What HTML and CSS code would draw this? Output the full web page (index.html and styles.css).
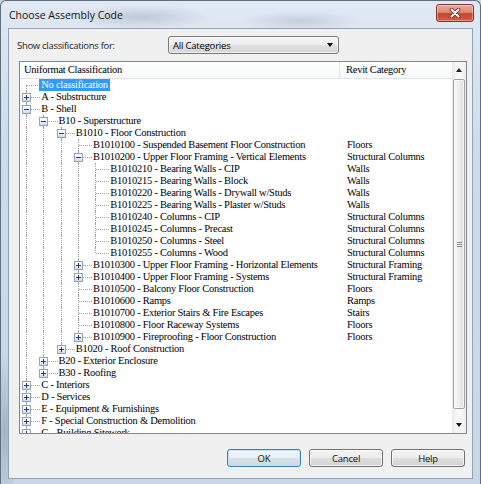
FILE: index.html
```html
<!DOCTYPE html>
<html>
<head>
<meta charset="utf-8">
<title>Choose Assembly Code</title>
<link rel="stylesheet" href="styles.css">
</head>
<body>
<div class="window">
  <div class="titlebar">
    <span class="title">Choose Assembly Code</span>
    <div class="close">
      <svg width="12" height="10" viewBox="0 0 12 10"><path d="M2.5 1.5 L9.5 8.5 M9.5 1.5 L2.5 8.5" stroke="#6b2a20" stroke-width="3.6" stroke-linecap="round"/><path d="M2.5 1.5 L9.5 8.5 M9.5 1.5 L2.5 8.5" stroke="#ffffff" stroke-width="2" stroke-linecap="round"/></svg>
    </div>
  </div>
  <div class="client">
    <div class="toprow">
      <span class="label">Show classifications for:</span>
      <div class="combo"><span>All Categories</span><i class="arrow-down"></i></div>
    </div>
    <div class="listbox">
      <div class="main">
        <div class="header"><span class="h1">Uniformat Classification</span><span class="h2">Revit Category</span></div>
        <div class="rows">
          <div class="row"><div class="tree"><i class="c f"></i><span class="txt sel">No classification</span></div></div>
          <div class="row"><div class="tree"><i class="c t"><b class="exp plus"></b></i><span class="txt">A - Substructure</span></div></div>
          <div class="row"><div class="tree"><i class="c t"><b class="exp"></b></i><span class="txt">B - Shell</span></div></div>
          <div class="row"><div class="tree"><i class="c v"></i><i class="c t"><b class="exp"></b></i><span class="txt">B10 - Superstructure</span></div></div>
          <div class="row"><div class="tree"><i class="c v"></i><i class="c v"></i><i class="c t"><b class="exp"></b></i><span class="txt">B1010 - Floor Construction</span></div></div>
          <div class="row"><div class="tree"><i class="c v"></i><i class="c v"></i><i class="c v"></i><i class="c t"></i><span class="txt">B1010100 - Suspended Basement Floor Construction</span></div><span class="cat">Floors</span></div>
          <div class="row"><div class="tree"><i class="c v"></i><i class="c v"></i><i class="c v"></i><i class="c t"><b class="exp"></b></i><span class="txt">B1010200 - Upper Floor Framing - Vertical Elements</span></div><span class="cat">Structural Columns</span></div>
          <div class="row"><div class="tree"><i class="c v"></i><i class="c v"></i><i class="c v"></i><i class="c v"></i><i class="c t"></i><span class="txt">B1010210 - Bearing Walls - CIP</span></div><span class="cat">Walls</span></div>
          <div class="row"><div class="tree"><i class="c v"></i><i class="c v"></i><i class="c v"></i><i class="c v"></i><i class="c t"></i><span class="txt">B1010215 - Bearing Walls - Block</span></div><span class="cat">Walls</span></div>
          <div class="row"><div class="tree"><i class="c v"></i><i class="c v"></i><i class="c v"></i><i class="c v"></i><i class="c t"></i><span class="txt">B1010220 - Bearing Walls - Drywall w/Studs</span></div><span class="cat">Walls</span></div>
          <div class="row"><div class="tree"><i class="c v"></i><i class="c v"></i><i class="c v"></i><i class="c v"></i><i class="c t"></i><span class="txt">B1010225 - Bearing Walls - Plaster w/Studs</span></div><span class="cat">Walls</span></div>
          <div class="row"><div class="tree"><i class="c v"></i><i class="c v"></i><i class="c v"></i><i class="c v"></i><i class="c t"></i><span class="txt">B1010240 - Columns - CIP</span></div><span class="cat">Structural Columns</span></div>
          <div class="row"><div class="tree"><i class="c v"></i><i class="c v"></i><i class="c v"></i><i class="c v"></i><i class="c t"></i><span class="txt">B1010245 - Columns - Precast</span></div><span class="cat">Structural Columns</span></div>
          <div class="row"><div class="tree"><i class="c v"></i><i class="c v"></i><i class="c v"></i><i class="c v"></i><i class="c t"></i><span class="txt">B1010250 - Columns - Steel</span></div><span class="cat">Structural Columns</span></div>
          <div class="row"><div class="tree"><i class="c v"></i><i class="c v"></i><i class="c v"></i><i class="c v"></i><i class="c l"></i><span class="txt">B1010255 - Columns - Wood</span></div><span class="cat">Structural Columns</span></div>
          <div class="row"><div class="tree"><i class="c v"></i><i class="c v"></i><i class="c v"></i><i class="c t"><b class="exp plus"></b></i><span class="txt">B1010300 - Upper Floor Framing - Horizontal Elements</span></div><span class="cat">Structural Framing</span></div>
          <div class="row"><div class="tree"><i class="c v"></i><i class="c v"></i><i class="c v"></i><i class="c t"><b class="exp plus"></b></i><span class="txt">B1010400 - Upper Floor Framing - Systems</span></div><span class="cat">Structural Framing</span></div>
          <div class="row"><div class="tree"><i class="c v"></i><i class="c v"></i><i class="c v"></i><i class="c t"></i><span class="txt">B1010500 - Balcony Floor Construction</span></div><span class="cat">Floors</span></div>
          <div class="row"><div class="tree"><i class="c v"></i><i class="c v"></i><i class="c v"></i><i class="c t"></i><span class="txt">B1010600 - Ramps</span></div><span class="cat">Ramps</span></div>
          <div class="row"><div class="tree"><i class="c v"></i><i class="c v"></i><i class="c v"></i><i class="c t"></i><span class="txt">B1010700 - Exterior Stairs &amp; Fire Escapes</span></div><span class="cat">Stairs</span></div>
          <div class="row"><div class="tree"><i class="c v"></i><i class="c v"></i><i class="c v"></i><i class="c t"></i><span class="txt">B1010800 - Floor Raceway Systems</span></div><span class="cat">Floors</span></div>
          <div class="row"><div class="tree"><i class="c v"></i><i class="c v"></i><i class="c v"></i><i class="c l"><b class="exp plus"></b></i><span class="txt">B1010900 - Fireproofing - Floor Construction</span></div><span class="cat">Floors</span></div>
          <div class="row"><div class="tree"><i class="c v"></i><i class="c v"></i><i class="c l"><b class="exp plus"></b></i><span class="txt">B1020 - Roof Construction</span></div></div>
          <div class="row"><div class="tree"><i class="c v"></i><i class="c t"><b class="exp plus"></b></i><span class="txt">B20 - Exterior Enclosure</span></div></div>
          <div class="row"><div class="tree"><i class="c v"></i><i class="c l"><b class="exp plus"></b></i><span class="txt">B30 - Roofing</span></div></div>
          <div class="row"><div class="tree"><i class="c t"><b class="exp plus"></b></i><span class="txt">C - Interiors</span></div></div>
          <div class="row"><div class="tree"><i class="c t"><b class="exp plus"></b></i><span class="txt">D - Services</span></div></div>
          <div class="row"><div class="tree"><i class="c t"><b class="exp plus"></b></i><span class="txt">E - Equipment &amp; Furnishings</span></div></div>
          <div class="row"><div class="tree"><i class="c t"><b class="exp plus"></b></i><span class="txt">F - Special Construction &amp; Demolition</span></div></div>
          <div class="row"><div class="tree"><i class="c t"><b class="exp plus"></b></i><span class="txt">G - Building Sitework</span></div></div>
        </div>
      </div>
      <div class="sb">
        <div class="sb-btn"><i class="arrow-up"></i></div>
        <div class="thumb"><i class="grip"></i><i class="grip"></i><i class="grip"></i></div>
        <div class="sb-track"></div>
        <div class="sb-btn"><i class="arrow-down"></i></div>
      </div>
    </div>
    <div class="buttons">
      <button class="btn default">OK</button>
      <button class="btn">Cancel</button>
      <button class="btn">Help</button>
    </div>
  </div>
</div>
</body>
</html>
```

FILE: styles.css
```css
html, body {
  margin: 0;
  padding: 0;
}
body {
  width: 481px;
  height: 484px;
  overflow: hidden;
  background: #c8d6e5;
  font-family: "Open Sans", "Noto Sans", sans-serif;
  color: #000;
}
.window {
  width: 481px;
  height: 484px;
  box-sizing: border-box;
  border: 1px solid #5e6f83;
  border-bottom: none;
  border-radius: 6px 6px 0 0;
  display: flex;
  flex-direction: column;
  background:
    radial-gradient(ellipse 70px 12px at 140px 16px, rgba(110,122,138,.28), rgba(110,122,138,0)),
    radial-gradient(ellipse 60px 10px at 300px 20px, rgba(110,122,138,.22), rgba(110,122,138,0)),
    radial-gradient(ellipse 14px 80px at 4px 430px, rgba(90,110,135,.35), rgba(90,110,135,0)),
    linear-gradient(180deg, #e0e9f3 0%, #cfdcea 30%, #c8d6e6 100%);
}
.titlebar {
  height: 27px;
  flex: none;
  display: flex;
  align-items: flex-start;
}
.title {
  margin: 6px 0 0 8px;
  font-size: 10.5px;
  line-height: 16px;
  color: #111;
}
.close {
  margin: 3px 6px 0 auto;
  width: 38px;
  height: 18px;
  box-sizing: border-box;
  border: 1px solid #7b3a30;
  border-radius: 3px;
  background: linear-gradient(180deg, #e9a99b 0%, #dc8a76 45%, #c7432d 55%, #d45f45 100%);
  box-shadow: inset 0 0 0 1px rgba(255,255,255,.35);
  display: flex;
  align-items: center;
  justify-content: center;
}
.client {
  flex: 1;
  margin: 0 7px 5px 7px;
  border: 1px solid #93a4b8;
  background: #f0f0f0;
  display: flex;
  flex-direction: column;
  padding: 7px 5px 0 8px;
}
.toprow {
  height: 18px;
  display: flex;
  align-items: center;
  flex: none;
}
.label {
  width: 151px;
  font-size: 9.5px;
  letter-spacing: -0.3px;
  color: #1a1a1a;
}
.combo {
  width: 171px;
  height: 18px;
  box-sizing: border-box;
  border: 1px solid #7a7a7a;
  border-radius: 3px;
  background: linear-gradient(180deg, #f6f6f6 0%, #ececec 50%, #e0e0e0 50%, #d6d6d6 100%);
  box-shadow: inset 0 0 0 1px rgba(255,255,255,.6);
  display: flex;
  align-items: center;
  padding-left: 4px;
  font-size: 9.5px;
  letter-spacing: -0.2px;
}
.arrow-down {
  width: 0;
  height: 0;
  border-left: 3.5px solid transparent;
  border-right: 3.5px solid transparent;
  border-top: 4px solid #111;
}
.arrow-up {
  width: 0;
  height: 0;
  border-left: 3.5px solid transparent;
  border-right: 3.5px solid transparent;
  border-bottom: 4px solid #222;
}
.combo .arrow-down {
  margin-left: auto;
  margin-right: 5px;
}
.listbox {
  margin: 7px 0 0 2px;
  height: 373px;
  box-sizing: border-box;
  border: 1px solid #828790;
  background: #fff;
  display: flex;
  flex: none;
}
.main {
  flex: 1;
  min-width: 0;
  display: flex;
  flex-direction: column;
}
.header {
  height: 16px;
  flex: none;
  display: flex;
  border-bottom: 1px solid #e3e3e3;
  background: linear-gradient(180deg, #ffffff, #f7f8f9);
  font-family: "Liberation Serif", serif;
  font-size: 10.5px;
  letter-spacing: -0.25px;
  line-height: 16px;
  white-space: nowrap;
  color: #000;
}
.h1 {
  width: 320px;
  box-sizing: border-box;
  padding-left: 4px;
  border-right: 1px solid #e3e3e3;
}
.h2 {
  padding-left: 6px;
}
.rows {
  flex: 1;
  overflow: hidden;
}
.row {
  display: flex;
  height: 12px;
  line-height: 12px;
  font-family: "Liberation Serif", serif;
  font-size: 10.5px;
  letter-spacing: -0.25px;
  white-space: nowrap;
  color: #000;
}
.tree {
  width: 327px;
  flex: none;
  display: flex;
}
.c {
  position: relative;
  width: 17.25px;
  height: 12px;
  flex: none;
}
.c.v::before,
.c.t::before,
.c.l::before,
.c.f::before {
  content: "";
  position: absolute;
  left: 6px;
  top: 0;
  bottom: 0;
  border-left: 1px dotted #a0a0a0;
}
.c.l::before {
  bottom: auto;
  height: 6px;
}
.c.f::before {
  top: 6px;
}
.c.t::after,
.c.l::after,
.c.f::after {
  content: "";
  position: absolute;
  left: 7px;
  right: -3px;
  top: 6px;
  border-top: 1px dotted #a0a0a0;
}
.exp {
  position: absolute;
  left: 2px;
  top: 2px;
  width: 9px;
  height: 9px;
  box-sizing: border-box;
  border: 1px solid #97a3b4;
  background: linear-gradient(180deg, #ffffff 0%, #e9ecf1 60%, #d3d9e2 100%);
  z-index: 1;
}
.exp::before {
  content: "";
  position: absolute;
  left: 1px;
  top: 3px;
  width: 5px;
  height: 1px;
  background: #2c3c5e;
}
.exp.plus::after {
  content: "";
  position: absolute;
  left: 3px;
  top: 1px;
  width: 1px;
  height: 5px;
  background: #2c3c5e;
}
.txt {
  margin-left: 2px;
  padding: 0 2px;
}
.txt.sel {
  background: #3399ff;
  color: #fff;
}
.sb {
  width: 14px;
  flex: none;
  display: flex;
  flex-direction: column;
  background: linear-gradient(90deg, #e9e9e9, #f6f6f6 30%, #f6f6f6 70%, #ececec);
}
.sb-btn {
  height: 16px;
  flex: none;
  display: flex;
  align-items: center;
  justify-content: center;
}
.thumb {
  margin: 1px 1px 0 1px;
  height: 330px;
  flex: none;
  box-sizing: border-box;
  border: 1px solid #a3a3a3;
  border-radius: 2px;
  background: linear-gradient(90deg, #f6f6f6 0%, #ececec 50%, #dcdcdc 100%);
  box-shadow: inset 0 0 0 1px rgba(255,255,255,.7);
  display: flex;
  flex-direction: column;
  align-items: center;
  justify-content: center;
  gap: 1px;
}
.grip {
  width: 5px;
  height: 1px;
  background: #8a8a8a;
}
.sb-track {
  flex: 1;
}
.buttons {
  margin-top: 15px;
  display: flex;
  justify-content: flex-end;
  gap: 8px;
  padding-right: 2px;
  flex: none;
}
.btn {
  width: 74px;
  height: 18px;
  box-sizing: border-box;
  margin: 0;
  padding: 0;
  border: 1px solid #707070;
  border-radius: 3px;
  background: linear-gradient(180deg, #f4f4f4 0%, #ececec 50%, #dedede 50%, #d2d2d2 100%);
  box-shadow: inset 0 0 0 1px rgba(255,255,255,.7);
  font-family: "Open Sans", "Noto Sans", sans-serif;
  font-size: 9.5px;
  letter-spacing: -0.2px;
  color: #111;
  display: flex;
  align-items: center;
  justify-content: center;
}
.btn.default {
  border-color: #3c7fb1;
  box-shadow: inset 0 0 0 1px #bfe3f8;
  background: linear-gradient(180deg, #f2f6f9 0%, #e8eef3 50%, #d8e2ea 50%, #cdd9e3 100%);
}
```
